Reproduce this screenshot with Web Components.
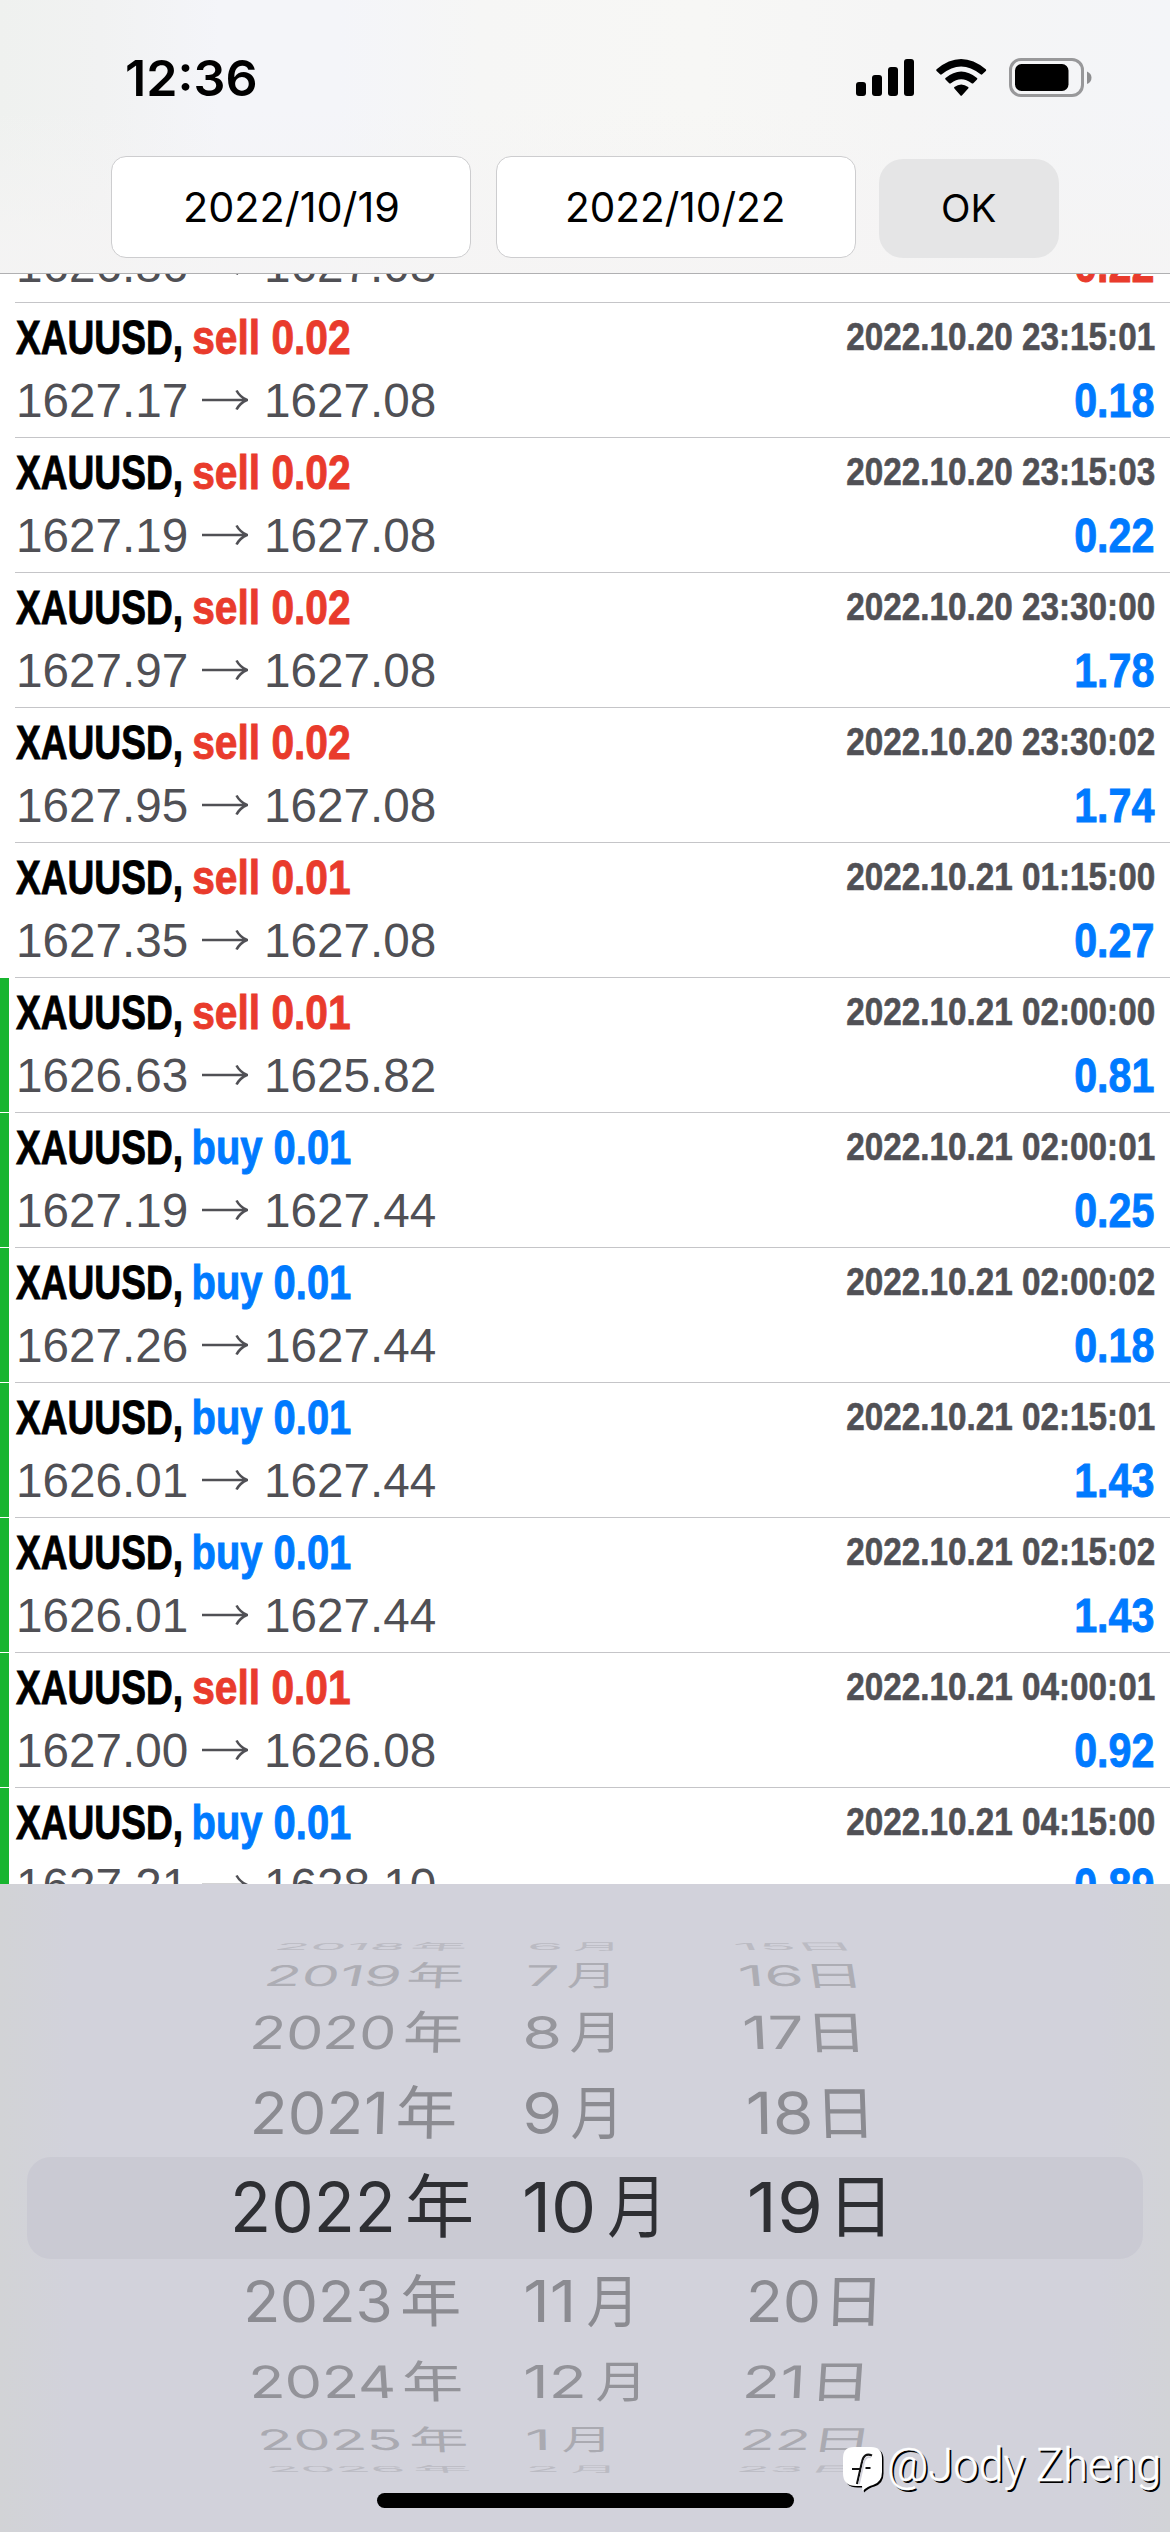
<!DOCTYPE html>
<html lang="zh-CN">
<head>
<meta charset="utf-8">
<title>History</title>
<style>
html,body{margin:0;padding:0;background:#fff}
body{width:1170px;height:2532px;overflow:hidden;font-family:Inter,"Noto Sans CJK SC",sans-serif}
</style>
</head>
<body>
<trade-app></trade-app>
<script>
const FONTS = {
  ui: ['400', 'Inter, "Liberation Sans", sans-serif'],
  uib: ['600', 'Inter, "Liberation Sans", sans-serif'],
  cond: ['700', '"Liberation Sans Narrow", "Liberation Sans", sans-serif'],
  num: ['400', '"Liberation Sans", Arial, sans-serif'],
  cjk: ['400', '"Noto Sans CJK SC", sans-serif'],
  mark: ['300', 'Roboto, sans-serif']
};
const ctx = document.createElement('canvas').getContext('2d');

/* A single line of text whose ink fills a given width; the box bottom is the baseline.
   "like" names a sample string whose metrics set the scale, so columns stay aligned. */
class FitText extends HTMLElement {
  connectedCallback() {
    const a = n => this.getAttribute(n);
    const [weight, family] = FONTS[a('face')];
    const size = +a('size'), h = +a('h'), w = +a('w');
    const sy = +(a('sy') || 1), skew = +(a('skew') || 0);
    const text = a('text'), like = a('like') || text;
    ctx.font = `${weight} ${size}px ${family}`;
    const m = ctx.measureText(like);
    const sx = w / (m.actualBoundingBoxLeft + m.actualBoundingBoxRight);
    const dx = m.actualBoundingBoxLeft * sx;
    this.attachShadow({mode: 'open'}).innerHTML = `<style>
      :host{display:flex;flex-direction:column;justify-content:flex-end;flex:none;width:${w}px;height:${h}px;white-space:pre;
        transform-origin:50% 100%;
        ${sy !== 1 || skew ? `transform:skewX(${skew}deg) scaleY(${sy});` : ''}}
      div{flex:none;height:${size}px;font:${weight} ${size}px/0 ${family}}
      i{display:inline-block;width:0;height:${size}px}
      span{display:inline-block;line-height:0;transform-origin:0 50%;transform:translateX(${dx}px) scaleX(${sx});
        -webkit-text-stroke:${a('stroke') || 0}px currentColor}
    </style><div><i></i><span></span></div>`;
    this.shadowRoot.querySelector('span').textContent = text;
  }
}
customElements.define('fit-text', FitText);

class StatusBar extends HTMLElement {
  connectedCallback() {
    this.attachShadow({mode: 'open'}).innerHTML = `<style>
      :host{display:flex;height:156px;padding:58px 78px 0 127px;box-sizing:border-box;justify-content:space-between;align-items:flex-start;color:#000}
      fit-text{margin-top:2px}
      .icons{display:flex}
      svg{display:block}
    </style>
    <fit-text face="uib" size="50" w="128.6" h="36" text="12:36"></fit-text>
    <div class="icons">
      <svg width="237" height="40" viewBox="855 58 237 40">
        <rect x="856" y="82" width="10" height="14" rx="3"/><rect x="872" y="75" width="10" height="21" rx="3"/>
        <rect x="888" y="67" width="10" height="29" rx="3"/><rect x="904" y="59" width="10" height="37" rx="3"/>
        <path d="M936.6 69.2 Q961 48.800 985.800 69.200 Q986.600 70 985.800 70.900 L982.300 74.300 Q981.500 75 980.600 74.300 Q961 58.600 941.800 74.300 Q940.900 75 940.100 74.300 L936.600 70.900 Q935.800 70 936.600 69.200Z"/>
        <path d="M945.500 78 Q961.200 65 977 78 Q977.800 78.800 977 79.600 L973.300 83.200 Q972.500 83.900 971.600 83.200 Q961.200 75.500 950.900 83.200 Q950 83.900 949.200 83.200 L945.500 79.600 Q944.700 78.800 945.500 78Z"/>
        <path d="M954.400 87 Q961.200 82 968.200 87 Q969 87.800 968.200 88.600 L962.100 95.200 Q961.200 96.200 960.300 95.200 L954.400 88.600 Q953.600 87.800 954.400 87Z"/>
        <rect x="1010.500" y="59.500" width="72" height="36" rx="10.500" fill="none" stroke="#98989a" stroke-width="3"/>
        <rect x="1015" y="64" width="53.500" height="27" rx="6.500"/>
        <path d="M1087 71.500 Q1091.500 73.500 1091.500 77.700 Q1091.500 82 1087 84Z" fill="#8e8e90"/>
      </svg>
    </div>`;
  }
}
customElements.define('status-bar', StatusBar);

class DateField extends HTMLElement {
  connectedCallback() {
    this.attachShadow({mode: 'open'}).innerHTML = `<style>
      :host{display:flex;box-sizing:border-box;width:360px;height:102px;border:1px solid #cdcdcf;border-radius:15px;background:#fff;padding:35px 0 0 73.500px}
    </style><slot></slot>`;
  }
}
customElements.define('date-field', DateField);

class OkButton extends HTMLElement {
  connectedCallback() {
    this.attachShadow({mode: 'open'}).innerHTML = `<style>
      :host{display:flex;box-sizing:border-box;width:180px;height:99px;border-radius:24px;background:#e5e5e6;padding:35px 0 0 64px}
    </style><slot></slot>`;
  }
}
customElements.define('ok-button', OkButton);

class TopBar extends HTMLElement {
  connectedCallback() {
    this.attachShadow({mode: 'open'}).innerHTML = `<style>
      :host{display:block;box-sizing:border-box;height:274px;border-bottom:1px solid #b0b0b2;
        background:linear-gradient(180deg,rgba(245,244,244,0) 40%,rgba(245,244,244,.8) 90%),linear-gradient(90deg,#eff1ef 0,#f1f2f2 100px,#f4f5f9 220px,#f4f5f9 340px,#f6f6f5 480px,#f7f7f5 700px,#f5f5f5 900px,#f4f5f8 1170px)}
      .row{display:flex;padding-left:111px;align-items:flex-start}
      date-field + date-field{margin-left:24.500px}
      ok-button{margin:3px 0 0 23.500px}
    </style>
    <status-bar></status-bar>
    <div class="row">
      <date-field><fit-text face="ui" size="41" w="211.5" h="30" text="2022/10/19"></fit-text></date-field>
      <date-field><fit-text face="ui" size="41" w="215.5" h="30" text="2022/10/22" style="margin-left:-2.5px"></fit-text></date-field>
      <ok-button><fit-text face="ui" size="38.500" w="52.500" h="28" text="OK"></fit-text></ok-button>
    </div>`;
  }
}
customElements.define('top-bar', TopBar);

class TradeRow extends HTMLElement {
  connectedCallback() {
    const a = n => this.getAttribute(n);
    const side = a('side'), buy = side === 'buy';
    const head = a('time') ? `
      <fit-text class="sym" face="cond" size="49" w="165" h="34" stroke="0.9" text="XAUUSD,"></fit-text>
      <fit-text class="${side}" face="cond" size="48.5" w="${buy ? 156.5 : 156.8}" h="34" stroke="0.9" like="${side} 0.02" text="${side} ${a('lots')}"></fit-text>
      <fit-text class="time" face="cond" size="39" w="307.6" h="28" stroke="0.6" like="2022.10.20 23:15:03" text="${a('time')}"></fit-text>` : '';
    const loss = a('profit').startsWith('-');
    this.attachShadow({mode: 'open'}).innerHTML = `<style>
      :host{display:flex;height:135px;flex:none}
      .bar{width:9px;height:134px;margin:1px 6px 0 0;background:${this.hasAttribute('marked') ? '#18b52f' : 'transparent'}}
      .body{flex:1;border-top:1px solid #c5c5c8;box-sizing:border-box;height:135px}
      .l{display:flex;align-items:flex-start}
      .a{height:34px;padding:17px 0 0 1px}
      .b{height:34px;padding:29px 0 0 4.300px;color:#505055}
      .sell{color:#e93b2c;margin-left:11.700px}.buy{color:#007aff;margin-left:12.800px}
      .time{margin:2px 15.700px 0 auto;color:#505055}
      .profit{margin:0 16.700px 0 auto;color:${loss ? '#e93b2c' : '#007aff'}}
      svg{margin:6px 19px 0 15.100px;display:block}
    </style>
    <div class="bar"></div>
    <div class="body">
      <div class="l a">${head}</div>
      <div class="l b">
        <fit-text face="num" size="48" w="167.6" h="34" like="1627.08" text="${a('from')}"></fit-text>
        <svg width="46" height="22" viewBox="0 0 46 22" fill="none" stroke="#505055" stroke-width="2.600"><path d="M0 11H44M34.500 1.500Q38 8 45 11Q38 14 34.500 20.500"/></svg>
        <fit-text face="num" size="48" w="167.6" h="34" like="1627.08" text="${a('to')}"></fit-text>
        <fit-text class="profit" face="cond" size="48.5" w="78.6" h="34" stroke="0.9" like="0.22" text="${a('profit').replace('-', '')}"></fit-text>
      </div>
    </div>`;
  }
}
customElements.define('trade-row', TradeRow);

const TRADES = [
  ['sell', '0.01', '', '1626.86', '1627.08', '-0.22'],
  ['sell', '0.02', '2022.10.20 23:15:01', '1627.17', '1627.08', '0.18'],
  ['sell', '0.02', '2022.10.20 23:15:03', '1627.19', '1627.08', '0.22'],
  ['sell', '0.02', '2022.10.20 23:30:00', '1627.97', '1627.08', '1.78'],
  ['sell', '0.02', '2022.10.20 23:30:02', '1627.95', '1627.08', '1.74'],
  ['sell', '0.01', '2022.10.21 01:15:00', '1627.35', '1627.08', '0.27'],
  ['sell', '0.01', '2022.10.21 02:00:00', '1626.63', '1625.82', '0.81', 1],
  ['buy', '0.01', '2022.10.21 02:00:01', '1627.19', '1627.44', '0.25', 1],
  ['buy', '0.01', '2022.10.21 02:00:02', '1627.26', '1627.44', '0.18', 1],
  ['buy', '0.01', '2022.10.21 02:15:01', '1626.01', '1627.44', '1.43', 1],
  ['buy', '0.01', '2022.10.21 02:15:02', '1626.01', '1627.44', '1.43', 1],
  ['sell', '0.01', '2022.10.21 04:00:01', '1627.00', '1626.08', '0.92', 1],
  ['buy', '0.01', '2022.10.21 04:15:00', '1627.21', '1628.10', '0.89', 1]
];
class TradeList extends HTMLElement {
  connectedCallback() {
    this.attachShadow({mode: 'open'}).innerHTML = `<style>
      :host{display:block;height:1610px;overflow:hidden;background:#fff}
      .in{display:flex;flex-direction:column;margin-top:-107px}
    </style><div class="in">${TRADES.map(t => `<trade-row side="${t[0]}" lots="${t[1]}" time="${t[2]}" from="${t[3]}" to="${t[4]}" profit="${t[5]}" ${t[6] ? 'marked' : ''}></trade-row>`).join('')}</div>`;
  }
}
customElements.define('trade-list', TradeList);

/* baseline, digit height, colour, cells: [text, left, right, skew] */
const WHEEL = [
  [1949.7, 7, '#bbbbc3', [['2018',276.7,400,-34],['年',412,464,-14],['6',530,560,-6],['月',574,613,0],['15',738,794,25],['日',806.7,847,35]]],
  [1985.3, 20.7, '#adadb4', [['2019',266.7,396,-13],['年',407.7,461,-5],['7',527.7,556,-2],['月',568.3,608.7,0],['16',741.7,801,6],['日',815,856,9]]],
  [2049, 33, '#96969c', [['2020',253.3,392.3,-5],['年',405,460,-2],['8',526.3,559,0],['月',571.3,613.5,0],['17',746,802,3],['日',816.7,858,4]]],
  [2134.3, 42, '#8b8b91', [['2021',254.3,382.7,-2],['年',398,454.3,-1],['9',526,558.7,0],['月',572.3,614.7,0],['18',748.7,810,1],['日',825.7,866.3,2]]],
  [2232, 50, '#2e2f33', [['2022',234.6,391.5,0],['年',407.6,470.7,0],['10',525,592.7,0],['月',609,656.7,0],['19',750,819,0],['日',838.7,883,0]]],
  [2322.3, 41.3, '#8b8b91', [['2023',248,390,2],['年',402.6,458.5,1],['11',525.7,570.3,0],['月',588,630,0],['20',749.7,817.3,-1],['日',833.3,874,-2]]],
  [2398.7, 32.3, '#939399', [['2024',254,393.8,4],['年',405,461,2],['12',526.3,583.3,0],['月',597,638.3,0],['21',746,799.3,-3],['日',818.7,860,-4]]],
  [2450.3, 20.3, '#aaaab1', [['2025',264,400.3,11],['年',411.8,466,4],['1',527.7,545.3,1],['月',563,603.7,0],['22',743,806,-7],['日',820,861.3,-9]]],
  [2471.7, 6, '#bbbbc3', [['2026',271.7,403.7,34],['年',416,469.5,14],['2',530,557.3,6],['月',570.7,609.3,0],['23',738.7,799.3,-25],['日',816,858,-35]]]
];
class WheelRow extends HTMLElement {
  connectedCallback() {
    const [, h, color, cells] = WHEEL[+this.getAttribute('index')];
    let x = 0, out = '';
    for (const [t, l, r, k] of cells) {
      const cjk = /[年月日]/.test(t);
      out += `<fit-text face="${cjk ? 'cjk' : 'ui'}" size="69" w="${(r - l).toFixed(1)}" h="${h}" sy="${h / 50}" skew="${k}" text="${t}" style="margin-left:${(l - x).toFixed(1)}px"></fit-text>`;
      x = r;
    }
    this.attachShadow({mode: 'open'}).innerHTML = `<style>:host{display:flex;height:${h}px;color:${color}}</style>${out}`;
  }
}
customElements.define('wheel-row', WheelRow);

class DateWheel extends HTMLElement {
  connectedCallback() {
    let y = 1884, rows = '';
    WHEEL.forEach((r, i) => {
      const top = r[0] - r[1];
      if (i === 4) {
        rows += `<div class="band" style="margin-top:${(2157 - y).toFixed(1)}px;padding-top:${(top - 2157).toFixed(1)}px"><wheel-row index="4"></wheel-row></div>`;
        y = 2258.7;
      } else {
        rows += `<wheel-row index="${i}" style="margin-top:${(top - y).toFixed(1)}px"></wheel-row>`;
        y = r[0];
      }
    });
    this.attachShadow({mode: 'open'}).innerHTML = `<style>
      :host{display:flex;flex-direction:column;height:648px;background:linear-gradient(90deg,#d2d3d6 0,#d2d2db 70px,#d2d2db 1100px,#d2d3d7 1170px)}
      .band{box-sizing:border-box;height:101.700px;margin-left:27px;width:1116px;border-radius:24px;background:#cacad3}
      .band wheel-row{margin-left:-27px}
      .home{margin:21.300px 0 0 377px;width:417px;height:15px;border-radius:8px;background:#000}
    </style>${rows}<div class="home"></div>`;
  }
}
customElements.define('date-wheel', DateWheel);

class WaterMark extends HTMLElement {
  connectedCallback() {
    this.attachShadow({mode: 'open'}).innerHTML = `<style>
      :host{position:absolute;left:842px;top:2446px;display:flex;color:#fff}
      fit-text{margin:2.300px 0 0 3px;text-shadow:2px 2px 0 #000}
      svg{display:block;flex:none}
    </style>
    <svg width="44" height="48" viewBox="0 0 44 48">
      <defs><path id="b" d="M12 1H29Q40 1 40 12V26Q40 36 31 39Q26 40 20.500 45L20 40H14Q1 40 1 27V12Q1 1 12 1Z"/></defs>
      <use href="#b" x="1.500" y="1.500" fill="#000"/><use href="#b" fill="#fff"/>
      <path d="M30 9.500Q22 6 20 16L15 38M10 23H18M23.500 22H28.500" fill="none" stroke="#111" stroke-width="2.200"/>
      <path d="M29 11.500Q24 9.500 22 16L17 38" fill="none" stroke="#d2d2db" stroke-width="1.800"/>
    </svg>
    <fit-text face="mark" size="45.500" w="269" h="32.300" stroke="0.4" text="@Jody Zheng"></fit-text>`;
  }
}
customElements.define('water-mark', WaterMark);

class TradeApp extends HTMLElement {
  connectedCallback() {
    this.attachShadow({mode: 'open'}).innerHTML = `<style>
      :host{display:flex;flex-direction:column;width:1170px;height:2532px;overflow:hidden;position:relative;background:#fff}
    </style><top-bar></top-bar><trade-list></trade-list><date-wheel></date-wheel><water-mark></water-mark>`;
  }
}
customElements.define('trade-app', TradeApp);
</script>
</body>
</html>
